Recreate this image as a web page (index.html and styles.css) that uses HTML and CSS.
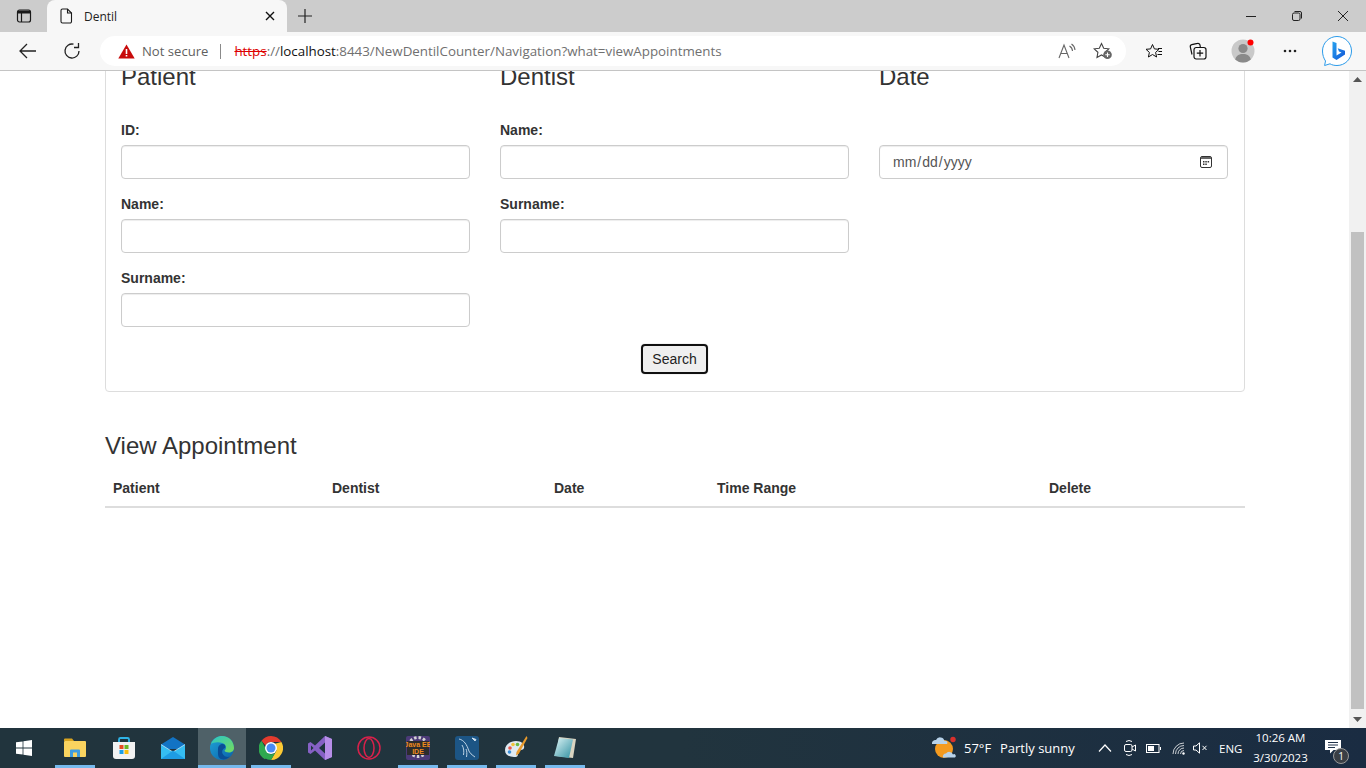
FILE: index.html
```html
<!DOCTYPE html>
<html lang="en">
<head>
<meta charset="utf-8">
<title>Dentil</title>
<link rel="stylesheet" href="styles.css">
</head>
<body>
<div class="screen">
  <header class="chrome">
    <div class="tabstrip">
      <button class="strip-btn sidebar-btn" aria-label="Tab actions">
        <svg width="16" height="16" viewBox="0 0 16 16" fill="none" stroke="#1a1a1a" stroke-width="1.2"><rect x="1.5" y="2" width="13" height="12" rx="2"/><path d="M1.5 5H14.5M5.5 5V14"/><path d="M2 2.6H14V5H2z" fill="#1a1a1a" stroke="none"/></svg>
      </button>
      <div class="tab">
        <svg class="tab-icon" width="14" height="16" viewBox="0 0 14 16" fill="none" stroke="#1a1a1a" stroke-width="1.1"><path d="M2 2.5A1.5 1.5 0 0 1 3.5 1H8.5L12.5 5V13.5A1.5 1.5 0 0 1 11 15H3.5A1.5 1.5 0 0 1 2 13.5Z"/><path d="M8.5 1V5H12.5"/></svg>
        <span class="tab-title">Dentil</span>
        <svg class="tab-close" width="10" height="10" viewBox="0 0 10 10" stroke="#111" stroke-width="1.4"><path d="M1 1L9 9M9 1L1 9"/></svg>
      </div>
      <button class="strip-btn new-tab" aria-label="New tab">
        <svg width="14" height="14" viewBox="0 0 14 14" stroke="#222" stroke-width="1.2"><path d="M7 0V14M0 7H14"/></svg>
      </button>
      <div class="win-controls">
        <span class="win-btn"><svg width="10" height="10" viewBox="0 0 10 10" stroke="#222"><path d="M0 5.5H10"/></svg></span>
        <span class="win-btn"><svg width="10" height="10" viewBox="0 0 10 10" fill="none" stroke="#222"><rect x=".5" y="2" width="7.5" height="7.5" rx="1.5"/><path d="M2.5 .5H8A1.5 1.5 0 0 1 9.5 2V7.5"/></svg></span>
        <span class="win-btn"><svg width="10" height="10" viewBox="0 0 10 10" stroke="#222"><path d="M0 0L10 10M10 0L0 10"/></svg></span>
      </div>
    </div>
    <div class="toolbar">
      <button class="tool-btn back" aria-label="Back">
        <svg width="18" height="16" viewBox="0 0 18 16" fill="none" stroke="#222" stroke-width="1.3"><path d="M17 8H1M8 1L1 8L8 15"/></svg>
      </button>
      <button class="tool-btn refresh" aria-label="Refresh">
        <svg width="18" height="18" viewBox="0 0 18 18" fill="none" stroke="#222" stroke-width="1.3"><path d="M10.5 2.2A7 7 0 1 0 16 9"/><path d="M15.5 1V5.5H11"/></svg>
      </button>
      <div class="address">
        <svg class="warn" width="17" height="15" viewBox="0 0 17 15"><path d="M8.5 0.5L16.7 14.6H0.3Z" fill="#c80b0b"/><path d="M7.7 5H9.3V10H7.7ZM7.7 11H9.3V12.6H7.7Z" fill="#fff"/></svg>
        <span class="not-secure">Not secure</span>
        <span class="addr-divider"></span>
        <span class="url"><span class="scheme">https</span>://<span class="host">localhost</span>:8443/NewDentilCounter/Navigation?what=viewAppointments</span>
        <svg class="addr-read" width="18" height="16" viewBox="0 0 18 16" fill="none" stroke="#666" stroke-width="1.1"><path d="M1 15L6 2L11 15M2.8 10.5H9.2"/><path d="M11.5 3A6 6 0 0 1 14.5 8M13.5 1A8 8 0 0 1 17 7"/></svg>
        <svg class="addr-fav" width="20" height="18" viewBox="0 0 20 18" fill="none" stroke="#444" stroke-width="1.1"><path d="M8.5 1.5L10.7 6.2L15.8 6.8L12.1 10.3L13 15.4L8.5 12.9L4 15.4L4.9 10.3L1.2 6.8L6.3 6.2Z"/><circle cx="14.5" cy="12.8" r="4.3" fill="#666" stroke="none"/><path d="M14.5 10.6V15M12.3 12.8H16.7" stroke="#fff"/></svg>
      </div>
      <button class="tool-btn favs" aria-label="Favorites">
        <svg width="18" height="17" viewBox="0 0 18 17" fill="none" stroke="#111" stroke-width="1"><path d="M7.5 1.5L9.4 5.900L14 6.300L10.600 9.400L11.600 14L7.500 11.500L3.400 14L4.400 9.400L1 6.300L5.600 5.900Z"/><path d="M13 5.500H17M13.500 8.500H17M12.500 11.500H17"/></svg>
      </button>
      <button class="tool-btn colls" aria-label="Collections">
        <svg width="18" height="18" viewBox="0 0 18 18" fill="none" stroke="#111" stroke-width="1.2"><path d="M3 12.5L1.3 5A2 2 0 0 1 2.8 2.7L8.5 1.4A2 2 0 0 1 11 3L11.3 5"/><rect x="5" y="5.5" width="12" height="11.5" rx="2.2" fill="#f7f7f7"/><path d="M11 8V14.5M7.8 11.2H14.2"/></svg>
      </button>
      <button class="tool-btn profile" aria-label="Profile">
        <svg width="24" height="24" viewBox="0 0 24 24"><circle cx="12" cy="12" r="11.5" fill="#c9c9c9"/><circle cx="12" cy="9.500" r="4.600" fill="#8a8a8a"/><path d="M4.200 20.500C5 16.800 8 15 12 15S19 16.800 19.800 20.500A11.500 11.500 0 0 1 4.200 20.500Z" fill="#8a8a8a"/><circle cx="19.500" cy="3.500" r="3" fill="#f00"/></svg>
      </button>
      <button class="tool-btn dots" aria-label="Settings and more">
        <svg width="14" height="4" viewBox="0 0 14 4" fill="#222"><circle cx="2" cy="2" r="1.300"/><circle cx="7" cy="2" r="1.300"/><circle cx="12" cy="2" r="1.300"/></svg>
      </button>
      <button class="tool-btn bing" aria-label="Bing">
        <svg width="32" height="32" viewBox="0 0 32 32">
          <defs><linearGradient id="bingG" x1="0" y1="0" x2="1" y2="1"><stop offset="0" stop-color="#27a2ee"/><stop offset="1" stop-color="#1257d8"/></linearGradient></defs>
          <path d="M16 1.500C8 1.500 1.500 8 1.500 16C1.500 20 2.800 23.500 4.500 26L3.600 30.500L9 28.800C11 30 13.300 30.500 16 30.500C24 30.500 30.500 24 30.500 16S24 1.500 16 1.500Z" fill="#fff" stroke="#2b9bea" stroke-width="1"/>
          <path d="M11.500 6.500L15.500 8V20.500L20.500 17.600L18 16.400L16.700 13.200L24 15.800V19.500L15.500 25L11.500 22.500Z" fill="url(#bingG)"/>
        </svg>
      </button>
    </div>
  </header>

  <div class="viewport">
    <main class="page">
      <section class="card">
        <div class="columns">
          <div class="column">
            <h3 class="col-title">Patient</h3>
            <div class="field"><label class="label" for="pid">ID:</label><input class="control" id="pid" type="text"></div>
            <div class="field"><label class="label" for="pname">Name:</label><input class="control" id="pname" type="text"></div>
            <div class="field"><label class="label" for="psur">Surname:</label><input class="control" id="psur" type="text"></div>
          </div>
          <div class="column">
            <h3 class="col-title">Dentist</h3>
            <div class="field"><label class="label" for="dname">Name:</label><input class="control" id="dname" type="text"></div>
            <div class="field"><label class="label" for="dsur">Surname:</label><input class="control" id="dsur" type="text"></div>
          </div>
          <div class="column">
            <h3 class="col-title">Date</h3>
            <div class="field"><label class="label" for="ddate">&nbsp;</label><input class="control date-control" id="ddate" type="date"></div>
          </div>
        </div>
        <div class="actions"><button class="search-btn" type="button">Search</button></div>
      </section>

      <h3 class="section-title">View Appointment</h3>
      <table class="appointments">
        <colgroup><col class="c1"><col class="c2"><col class="c3"><col class="c4"><col class="c5"></colgroup>
        <thead><tr><th>Patient</th><th>Dentist</th><th>Date</th><th>Time Range</th><th>Delete</th></tr></thead>
      </table>
    </main>
    <div class="scrollbar">
      <span class="sb-arrow"><svg width="9" height="5" viewBox="0 0 9 5" fill="#555"><path d="M4.500 0L9 5H0Z"/></svg></span>
      <span class="sb-thumb"></span>
      <span class="sb-arrow"><svg width="9" height="5" viewBox="0 0 9 5" fill="#555"><path d="M0 0H9L4.500 5Z"/></svg></span>
    </div>
  </div>

  <footer class="taskbar">
    <div class="start">
      <svg width="16" height="16" viewBox="0 0 16 16" fill="#fff"><path d="M0 2.300L6.600 1.400V7.600H0ZM7.400 1.300L16 0V7.600H7.400ZM0 8.400H6.600V14.600L0 13.700ZM7.400 8.400H16V16L7.400 14.700Z"/></svg>
    </div>
    <div class="task running">
      <svg width="22" height="19" viewBox="0 0 22 19"><path d="M0 1.500A1 1 0 0 1 1 .5H8L10 3H0Z" fill="#d9a420"/><rect y="3" width="22" height="16" rx="1" fill="#fad35f"/><path d="M6 19V12.500A1 1 0 0 1 7 11.500H15A1 1 0 0 1 16 12.500V19H13V14.500H9V19Z" fill="#3f9ce0"/></svg>
    </div>
    <div class="task">
      <svg width="24" height="24" viewBox="0 0 24 24"><path d="M7 6V3.500A1.500 1.500 0 0 1 8.500 2H15.500A1.500 1.500 0 0 1 17 3.500V6" fill="none" stroke="#2fb4e8" stroke-width="1.800"/><path d="M1 6H23V20A3 3 0 0 1 20 23H4A3 3 0 0 1 1 20Z" fill="#f2f2f2"/><rect x="7.500" y="9" width="4" height="4" fill="#e74c23"/><rect x="12.500" y="9" width="4" height="4" fill="#6cb825"/><rect x="7.500" y="14" width="4" height="4" fill="#1c9fe8"/><rect x="12.500" y="14" width="4" height="4" fill="#fbbd0b"/></svg>
    </div>
    <div class="task">
      <svg width="24" height="22" viewBox="0 0 24 22"><path d="M0 7.500L12 0L24 7.500V12H0Z" fill="#1273c4"/><path d="M0 7.500L12 15L24 7.500V22H0Z" fill="#35bdf2"/><path d="M0 7.500L12 15L24 7.500" fill="none" stroke="#d6f1fc" stroke-width=".7"/><path d="M0 22L12 13.500L24 22Z" fill="#1e9ce4"/></svg>
    </div>
    <div class="task active">
      <svg width="24" height="24" viewBox="0 0 24 24">
        <defs>
          <linearGradient id="edgeA" x1="0" y1="0" x2="1" y2="1"><stop offset="0" stop-color="#1fa4d8"/><stop offset="1" stop-color="#0b5fa8"/></linearGradient>
          <linearGradient id="edgeB" x1="0" y1="0" x2="1" y2="1"><stop offset="0" stop-color="#2ac6c9"/><stop offset="1" stop-color="#78dc5a"/></linearGradient>
        </defs>
        <circle cx="12" cy="12" r="12" fill="url(#edgeA)"/>
        <path d="M1 8C3 2.500 8 0 12 0C19 0 24 5.500 24 12C24 15 21.500 16.500 19 16.500C16.500 16.500 14.500 15.500 14.500 14.500C17 13 16.500 8.500 12.500 7C7.500 5.500 3 6.500 1 8Z" fill="url(#edgeB)"/>
        <path d="M8 13C8 9.500 10.500 8 12.500 8C15 8 16 10 15 12C13 12.500 11.500 15 12.500 17.500C14 21 18 21.500 20 20.500C17 23.500 12 24.500 9.500 22C7.500 20 8 16 8 13Z" fill="#0a4e97"/>
      </svg>
    </div>
    <div class="task running">
      <svg width="24" height="24" viewBox="0 0 24 24"><path d="M12 0A12 12 0 0 1 22.400 6H12A6 6 0 0 0 6.500 9.500L2.500 4.700A12 12 0 0 1 12 0Z" fill="#e33b2e"/><path d="M2.500 4.700L6.800 12.500L10.500 17.800L6 23.300A12 12 0 0 1 2.500 4.700Z" fill="#2fa84f"/><path d="M22.400 6A12 12 0 0 1 12 24L17.500 14.500L15 8Z" fill="#fcc934"/><path d="M6 12A6 6 0 0 0 17.500 14.500L12 24A12 12 0 0 1 5.500 22L10.500 17.800Z" fill="#2fa84f"/><circle cx="12" cy="12" r="6" fill="#fff"/><circle cx="12" cy="12" r="4.500" fill="#4a8af4"/></svg>
    </div>
    <div class="task">
      <svg width="24" height="24" viewBox="0 0 24 24"><path d="M17 0L24 3V21L17 24L7 14.500L2.500 18L0 16.500V7.500L2.500 6L7 9.500Z" fill="#8661c5"/><path d="M17 0L24 3V21L17 24Z" fill="#b78ee8"/><path d="M17 6.500L11 12L17 17.500Z" fill="#1e333e"/><path d="M3 9.500L5.500 12L3 14.500Z" fill="#1e333e"/></svg>
    </div>
    <div class="task">
      <svg width="24" height="24" viewBox="0 0 24 24" fill="none" stroke="#d8214b" stroke-width="1.500"><circle cx="12" cy="12" r="11"/><ellipse cx="12" cy="12" rx="5" ry="9.500"/></svg>
    </div>
    <div class="task running">
      <svg width="24" height="24" viewBox="0 0 24 24"><rect width="24" height="24" rx="2" fill="#4b3a78"/><circle cx="12" cy="11" r="9.500" fill="none" stroke="#d5d5d5" stroke-width="3" stroke-dasharray="2.500 2"/><rect x="1" y="5" width="22" height="14" fill="#2c2c2c"/><text x="12" y="11" class="java-text">Java EE</text><text x="12" y="18" class="java-text">IDE</text></svg>
    </div>
    <div class="task running">
      <svg width="24" height="24" viewBox="0 0 24 24"><rect width="24" height="24" rx="3" fill="#1c5585"/><path d="M4 3C9 4 12 9 13.500 14C14.500 17 17 19 20 21M7 9C9 12 9 16 8.500 19M11 13C12 15 12 18 11.500 21" fill="none" stroke="#cfe0ee" stroke-width=".9"/><path d="M17 2L20 5L21 3.500Z" fill="#cfe0ee" stroke="#cfe0ee"/></svg>
    </div>
    <div class="task running">
      <svg width="24" height="24" viewBox="0 0 24 24"><path d="M1 14C1 8 7 5 12 5C18 5 21 9 20 12C19 15 15 13 14 16C13.500 19 15 21 10 21C5 21 1 19 1 14Z" fill="#dfe9f2"/><circle cx="6" cy="12" r="1.800" fill="#e8574a"/><circle cx="9" cy="8.500" r="1.800" fill="#f2c43b"/><circle cx="13.500" cy="8.500" r="1.800" fill="#69b944"/><circle cx="5.500" cy="16" r="1.800" fill="#3b8fd9"/><path d="M22.500 0L23.500 2L15 17.500L12 19.500L12.500 16Z" fill="#e89a2c"/></svg>
    </div>
    <div class="task running">
      <svg width="24" height="24" viewBox="0 0 24 24">
        <defs><linearGradient id="noteG" x1="0" y1="0" x2="1" y2="1"><stop offset="0" stop-color="#dff5f7"/><stop offset="1" stop-color="#2f8fa0"/></linearGradient></defs>
        <path d="M6 1L23 3L20 22L3 20Z" fill="#d9d3c0"/><path d="M6 2L20 3.500L16 22L1 20Z" fill="url(#noteG)"/>
      </svg>
    </div>

    <div class="tray">
      <svg class="weather-icon" width="26" height="24" viewBox="0 0 26 24"><circle cx="12" cy="13" r="9" fill="#f49b1f"/><path d="M0 8A3.500 3.500 0 0 1 4 4A4.500 4.500 0 0 1 12.500 5A2 2 0 0 1 15 8Z" fill="#b8d3ea"/><circle cx="21" cy="3.500" r="2.700" fill="#d9302c"/><path d="M11 21.500A3 3 0 0 1 14 17.500A4 4 0 0 1 21 18.500A1.500 1.500 0 0 1 23 21.500Z" fill="#b8d3ea"/></svg>
      <span class="temp">57°F</span>
      <span class="cond">Partly sunny</span>
      <svg class="chevron" width="14" height="8" viewBox="0 0 14 8" fill="none" stroke="#fff" stroke-width="1.200"><path d="M1 7.500L7 1L13 7.500"/></svg>
      <svg class="meet" width="12" height="18" viewBox="0 0 12 18" fill="none" stroke="#fff"><rect x=".5" y="5.500" width="7.500" height="7" rx="1.500"/><path d="M8 8L11.500 6V12L8 10M2 2.500Q5 .5 8 2.500M2 15.500Q5 17.500 8 15.500"/></svg>
      <svg class="battery" width="15" height="9" viewBox="0 0 15 9" fill="none" stroke="#fff"><rect x=".5" y=".5" width="12.500" height="8"/><rect x="2" y="2" width="6" height="5" fill="#fff" stroke="none"/><path d="M14.500 3V6"/></svg>
      <svg class="wifi" width="14" height="13" viewBox="0 0 14 13" fill="none" stroke="#fff" stroke-width=".9"><path d="M1 12A11 11 0 0 1 12 1M3.500 12A8.500 8.500 0 0 1 12 3.500M6 12A6 6 0 0 1 12 6M8.500 12A3.500 3.500 0 0 1 12 8.500" opacity=".85"/><circle cx="11.500" cy="11.500" r="1.200" fill="#fff" stroke="none"/></svg>
      <svg class="volume" width="15" height="12" viewBox="0 0 15 12" fill="none" stroke="#fff"><path d="M.5 4H3L6.500 .8V11.200L3 8H.5Z"/><path d="M9.500 3.800L13.500 8M13.500 3.800L9.500 8"/></svg>
      <span class="lang">ENG</span>
      <div class="clock"><span>10:26 AM</span><span>3/30/2023</span></div>
      <div class="notif">
        <svg width="16" height="14" viewBox="0 0 16 14"><path d="M0 0H16V10H8.500L5 13.500V10H0Z" fill="#fff"/><path d="M3 2.500H13M3 5H13M3 7.500H10" stroke="#22334a"/></svg>
        <span class="notif-badge">1</span>
      </div>
    </div>
  </footer>
</div>
</body>
</html>
```

FILE: styles.css
```css
* { box-sizing: border-box; }
html, body { margin: 0; padding: 0; height: 100%; overflow: hidden; }
body { font-family: "Liberation Sans", Arial, sans-serif; font-size: 14px; color: #333; background: #fff; }
button { border: 0; background: none; padding: 0; margin: 0; font: inherit; color: inherit; }
svg { display: block; flex: none; }

.screen { width: 1366px; height: 768px; display: flex; flex-direction: column; }

/* browser chrome */
.chrome { height: 71px; flex: none; border-bottom: 1px solid #c4c4c4; background: #f7f7f7; font-family: "Open Sans", sans-serif; }
.tabstrip { height: 32px; background: #cccccc; display: flex; align-items: stretch; }
.strip-btn { display: flex; align-items: center; justify-content: center; }
.sidebar-btn { width: 47px; }
.tab { width: 240px; background: #f7f7f7; border-radius: 8px 8px 0 0; display: flex; align-items: center; padding: 0 12px 0 12px; }
.tab-title { font-size: 12px; color: #222; margin-left: 11px; flex: 1; }
.new-tab { width: 36px; }
.win-controls { margin-left: auto; display: flex; }
.win-btn { width: 46px; display: flex; align-items: center; justify-content: center; }

.toolbar { height: 38px; display: flex; align-items: flex-start; padding: 4px 0 0 6px; }
.tool-btn { display: flex; align-items: center; justify-content: center; height: 30px; }
.back { width: 44px; }
.refresh { width: 44px; }
.address { width: 1026px; height: 30px; margin: 0 0 0 6px; background: #fff; border-radius: 15px; display: flex; align-items: center; padding-left: 18px; font-size: 13.1px; white-space: nowrap; }
.not-secure { color: #5f5f5f; margin-left: 7px; }
.addr-divider { width: 1px; height: 15px; background: #8a8a8a; margin: 0 13px 0 12px; }
.url { color: #707070; font-size: 13.35px; }
.scheme { color: #d00; text-decoration: line-through; }
.host { color: #111; }
.addr-read { margin-left: auto; margin-right: 17px; }
.addr-fav { margin-right: 13px; }
.favs { width: 56px; }
.colls { width: 32px; }
.profile { width: 58px; }
.dots { width: 36px; }
.bing { width: 58px; }

/* page */
.viewport { flex: 1; min-height: 0; display: flex; }
.page { flex: 1; min-width: 0; overflow: hidden; padding: 0 104px 0 105px; }
.card { width: 1140px; margin-top: -40px; border: 1px solid #ddd; border-radius: 4px; padding: 32px 15px 17px; }
.columns { display: grid; grid-template-columns: repeat(3, 349px); column-gap: 30px; }
.col-title { font-size: 24px; font-weight: 500; line-height: 26.4px; margin: 0 0 29.6px; color: #333; }
.field { margin-bottom: 15px; }
.label { display: block; font-weight: 700; line-height: 20px; margin-bottom: 5px; }
.control { display: block; width: 100%; height: 34px; padding: 6px 12px; font: inherit; color: #555; background: #fff; border: 1px solid #ccc; border-radius: 4px; box-shadow: inset 0 1px 1px rgba(0, 0, 0, .075); }
.date-control { padding-left: 12px; padding-right: 14px; }
.date-control::-webkit-calendar-picker-indicator {
  width: 14px; height: 14px; padding: 0; margin: 0;
  background: url("data:image/svg+xml,%3Csvg xmlns='http://www.w3.org/2000/svg' width='14' height='14' viewBox='0 0 14 14'%3E%3Crect x='1.500' y='1.500' width='11' height='11' rx='1.500' fill='none' stroke='%23333'/%3E%3Cpath d='M2 2h10v2H2z' fill='%23666'/%3E%3Cpath d='M4 6h1.500v1.500H4zM6.300 6h1.500v1.500H6.300zM8.600 6h1.500v1.500H8.600zM4 8.500h1.500V10H4zM6.300 8.500h1.500V10H6.300z' fill='%23333'/%3E%3C/svg%3E") center / 14px 14px no-repeat;
}
.actions { display: flex; justify-content: center; margin-top: 2px; padding-right: 1px; }
.search-btn { width: 67px; height: 30px; background: #efefef; border: 2px solid #101010; border-radius: 4px; box-shadow: 0 0 0 1px #f4f4f4; color: #222; }
.section-title { font-size: 24px; font-weight: 500; line-height: 26.4px; margin: 41px 0 10.6px; color: #333; }
.appointments { width: 1140px; table-layout: fixed; border-collapse: collapse; }
.appointments th { text-align: left; padding: 8px; line-height: 20px; border-bottom: 2px solid #ddd; font-weight: 700; }
.c1 { width: 219px; }
.c2 { width: 222px; }
.c3 { width: 163px; }
.c4 { width: 332px; }
.c5 { width: 204px; }

.scrollbar { width: 17px; flex: none; background: #f1f1f1; display: flex; flex-direction: column; align-items: center; }
.sb-arrow { height: 17px; display: flex; align-items: center; justify-content: center; }
.sb-thumb { width: 13px; height: 477px; margin-top: 144px; margin-bottom: 2px; background: #c1c1c1; }

/* taskbar */
.taskbar { height: 40px; flex: none; display: flex; align-items: center; color: #fff; background: linear-gradient(90deg, #21343d 0%, #21343e 50%, #1a2c42 100%); font-family: "Open Sans", sans-serif; }
.start { width: 51px; height: 40px; display: flex; align-items: center; justify-content: center; padding-right: 3px; }
.task { width: 48px; height: 40px; margin-right: 1px; display: flex; align-items: center; justify-content: center; padding-bottom: 1px; position: relative; }
.running::after { content: ""; position: absolute; left: 4px; right: 4px; bottom: 0; height: 3px; background: #76b9ed; }
.active { background: #4f6168; }
.active::after { content: ""; position: absolute; left: 0; right: 0; bottom: 0; height: 3px; background: #76b9ed; }
.java-text { font-family: "Liberation Sans", sans-serif; font-size: 7px; font-weight: 700; fill: #f08a1d; text-anchor: middle; }

.tray { margin-left: auto; display: flex; align-items: center; height: 40px; }
.weather-icon { margin-right: 6px; }
.temp { font-size: 13px; width: 28px; margin-right: 8px; white-space: nowrap; }
.cond { font-size: 13px; width: 75px; white-space: nowrap; }
.chevron { margin-left: 23px; }
.meet { margin-left: 12px; }
.battery { margin-left: 10px; }
.wifi { margin-left: 11px; }
.volume { margin-left: 7px; }
.lang { font-size: 11.5px; margin-left: 11px; width: 34px; }
.clock { width: 55px; display: flex; flex-direction: column; align-items: center; font-size: 11.5px; line-height: 20px; white-space: nowrap; }
.notif { width: 58px; padding-left: 17px; height: 40px; display: flex; align-items: center; position: relative; padding-bottom: 3px; }
.notif-badge { position: absolute; left: 25px; top: 20px; width: 16px; height: 16px; border-radius: 50%; background: #3a3f45; border: 1px solid #999; font-size: 10px; line-height: 14px; text-align: center; }
```
